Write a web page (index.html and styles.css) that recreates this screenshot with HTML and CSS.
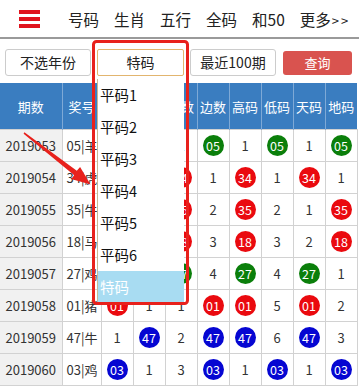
FILE: index.html
```
<!DOCTYPE html>
<html>
<head>
<meta charset="utf-8">
<title>特码 历史</title>
<link rel="stylesheet" href="styles.css">
</head>
<body>
<div class="topnav">
	<a class="menu"><span></span><span></span><span></span></a>
	<div class="links">
		<a>号码</a><a>生肖</a><a>五行</a><a>全码</a><a>和50</a><a>更多<small>&gt;&gt;</small></a>
	</div>
</div>

<div class="filters">
	<div class="btn w86">不选年份</div>
	<div class="select">特码</div>
	<div class="btn w86">最近100期</div>
	<div class="btn query">查询</div>
</div>

<table class="grid">
	<colgroup>
		<col class="c-qi"><col class="c-jh"><col><col><col><col><col><col><col><col>
	</colgroup>
	<tr class="head">
		<th>期数</th><th>奖号</th><th>小数</th><th>大数</th><th>中数</th><th>边数</th><th>高码</th><th>低码</th><th>天码</th><th>地码</th>
	</tr>
	<tr>
		<td class="qi">2019053</td><td class="jh">05|羊</td><td><b class="g">05</b></td><td>1</td><td>1</td><td><b class="g">05</b></td><td>1</td><td><b class="g">05</b></td><td>1</td><td><b class="g">05</b></td>
	</tr>
	<tr>
		<td class="qi">2019054</td><td class="jh">34|虎</td><td>1</td><td><b class="r">34</b></td><td><b class="r">34</b></td><td>1</td><td><b class="r">34</b></td><td>1</td><td><b class="r">34</b></td><td>1</td>
	</tr>
	<tr>
		<td class="qi">2019055</td><td class="jh">35|牛</td><td>2</td><td><b class="r">35</b></td><td><b class="r">35</b></td><td>2</td><td><b class="r">35</b></td><td>2</td><td>1</td><td><b class="r">35</b></td>
	</tr>
	<tr>
		<td class="qi">2019056</td><td class="jh">18|马</td><td><b class="r">18</b></td><td>1</td><td><b class="r">18</b></td><td>3</td><td><b class="r">18</b></td><td>3</td><td>2</td><td><b class="r">18</b></td>
	</tr>
	<tr>
		<td class="qi">2019057</td><td class="jh">27|鸡</td><td>1</td><td><b class="g">27</b></td><td><b class="g">27</b></td><td>4</td><td><b class="g">27</b></td><td>4</td><td><b class="g">27</b></td><td>1</td>
	</tr>
	<tr>
		<td class="qi">2019058</td><td class="jh">01|猪</td><td><b class="r">01</b></td><td>1</td><td>1</td><td><b class="r">01</b></td><td><b class="r">01</b></td><td>5</td><td><b class="r">01</b></td><td>2</td>
	</tr>
	<tr>
		<td class="qi">2019059</td><td class="jh">47|牛</td><td>1</td><td><b class="b">47</b></td><td>2</td><td><b class="b">47</b></td><td><b class="b">47</b></td><td>6</td><td><b class="b">47</b></td><td>3</td>
	</tr>
	<tr>
		<td class="qi">2019060</td><td class="jh">03|鸡</td><td><b class="b">03</b></td><td>1</td><td>3</td><td><b class="b">03</b></td><td>1</td><td><b class="b">03</b></td><td>1</td><td><b class="b">03</b></td>
	</tr>
</table>

<ul class="droplist">
	<li>平码1</li>
	<li>平码2</li>
	<li>平码3</li>
	<li>平码4</li>
	<li>平码5</li>
	<li>平码6</li>
	<li class="on">特码</li>
</ul>

<svg class="mark" width="359" height="388" viewBox="0 0 359 388">
	<rect x="93.5" y="41.5" width="94" height="262" rx="3" fill="none" stroke="#e8211c" stroke-width="3"/>
	<polygon fill="#e8211c" points="24.4,132.3 76.8,170.8 80.1,167 90.5,184.5 71.2,179 74.2,175.3 23.6,133.7"/>
</svg>
</body>
</html>
```

FILE: styles.css
```
body {
	margin: 0;
	font-family: "Noto Sans CJK SC", "Noto Sans", sans-serif;
	color: #333333;
	background: #ffffff;
	position: relative;
	width: 359px;
	height: 388px;
	overflow: hidden;
}
.topnav {
	display: flex;
	align-items: center;
	height: 37px;
	border-bottom: 2px solid #9a9a9a;
	padding-left: 19px;
}
.menu {
	display: flex;
	flex-direction: column;
	gap: 3px;
	width: 21px;
}
.menu span {
	display: block;
	height: 4px;
	background: #e0141e;
}
.links {
	display: flex;
	gap: 15px;
	margin-left: 28px;
	font-size: 15.5px;
	color: #222222;
}
.links small {
	font-size: 13px;
	letter-spacing: 2px;
	margin-left: 1px;
}
.filters {
	display: flex;
	align-items: center;
	gap: 6px;
	padding: 10px 0 0 5px;
	height: 27px;
}
.btn, .select {
	box-sizing: border-box;
	height: 27px;
	line-height: 25px;
	text-align: center;
	font-size: 14px;
	color: #222222;
	border: 1px solid #cccccc;
	border-radius: 3px;
}
.w86 {
	width: 86px;
}
.select {
	width: 87px;
	border-color: #e2b56f;
	border-radius: 2px;
}
.query {
	width: 69px;
	height: 24px;
	line-height: 24px;
	margin-left: 1px;
	border: none;
	background: #d9534f;
	color: #ffffff;
	font-size: 13px;
}
.grid {
	margin-top: 7px;
	border-collapse: collapse;
	table-layout: fixed;
	width: 357px;
	font-size: 13px;
}
.grid col {
	width: 32px;
}
.grid col.c-qi {
	width: 62px;
}
.grid col.c-jh {
	width: 39px;
}
.grid th {
	height: 46px;
	padding: 0;
	background: #3a7dc0;
	color: #ffffff;
	font-weight: normal;
	font-size: 13px;
	border-left: 1px solid #7ea9d6;
	white-space: nowrap;
	overflow: hidden;
}
.grid th:first-child {
	border-left: none;
}
.grid td {
	height: 31px;
	padding: 0;
	text-align: center;
	border: 1px solid #d2d2d2;
	white-space: nowrap;
	overflow: hidden;
}
.grid td:first-child {
	border-left: none;
}
.grid td.qi {
	background: #f1f1f1;
	font-size: 13px;
}
.grid td.jh {
	text-align: left;
	padding-left: 4px;
}
.grid b {
	display: inline-block;
	width: 21px;
	height: 21px;
	line-height: 21px;
	border-radius: 50%;
	color: #ffffff;
	font-weight: normal;
	font-size: 12.5px;
	vertical-align: middle;
}
.grid b.r {
	background: #ea0a0f;
}
.grid b.g {
	background: #0b7f0b;
}
.grid b.b {
	background: #0606d2;
}
.droplist {
	position: absolute;
	left: 97px;
	top: 79px;
	width: 87px;
	margin: 0;
	padding: 0;
	list-style: none;
	background: #ffffff;
	border-left: 1px solid #c9b894;
	box-sizing: border-box;
}
.droplist li {
	height: 32px;
	line-height: 32px;
	padding-left: 2px;
	font-size: 14.5px;
	color: #111111;
}
.droplist li.on {
	background: #a8dcf2;
	color: #ffffff;
}
.mark {
	position: absolute;
	left: 0;
	top: 0;
	pointer-events: none;
}
```
